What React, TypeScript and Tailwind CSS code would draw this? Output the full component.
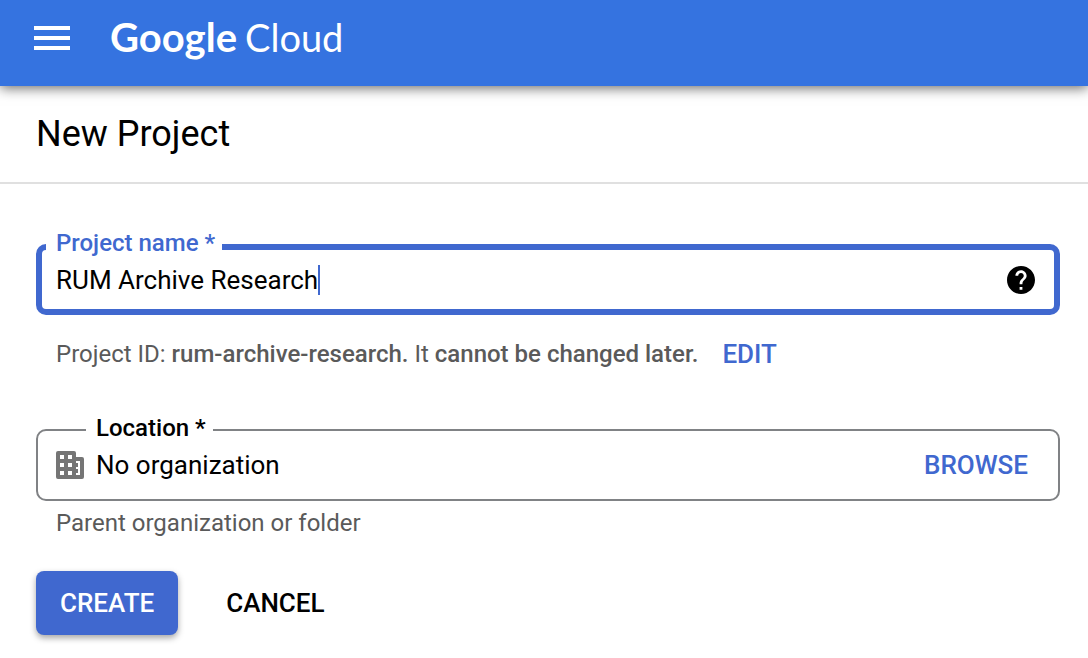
import { useState } from "react";

function HelpIcon() {
  return (
    <svg viewBox="2 2 20 20" className="size-7" fill="currentColor" aria-hidden="true">
      <path d="M12 2C6.48 2 2 6.48 2 12s4.48 10 10 10 10-4.48 10-10S17.52 2 12 2zm1 17h-2v-2h2v2zm2.07-7.75l-.9.92C13.45 12.9 13 13.5 13 15h-2v-.5c0-1.1.45-2.1 1.17-2.83l1.24-1.26c.37-.36.59-.86.59-1.41 0-1.1-.9-2-2-2s-2 .9-2 2H8c0-2.21 1.79-4 4-4s4 1.79 4 4c0 .88-.36 1.68-.93 2.25z" />
    </svg>
  );
}

function OrganizationIcon() {
  return (
    <svg viewBox="0 0 28 28" className="size-7 shrink-0" aria-hidden="true">
      <path
        fill="#757575"
        fillRule="evenodd"
        d="M2 0h16a2 2 0 0 1 2 2v4h6a2 2 0 0 1 2 2v18a2 2 0 0 1-2 2H2a2 2 0 0 1-2-2V2a2 2 0 0 1 2-2zM4 4v4h4V4zM12 4v4h4V4zM4 12v4h4v-4zM12 12v4h4v-4zM4 20v4h4v-4zM12 20v4h4v-4zM20 10v2h2v4h-2v2h2v4h-2v2h4V10z"
      />
    </svg>
  );
}

export default function App() {
  const [name, setName] = useState("RUM Archive Research");
  const projectId = name.trim().toLowerCase().replace(/[^a-z0-9]+/g, "-");

  return (
    <div className="min-h-screen bg-white font-['Roboto',sans-serif] text-black">
      <header className="relative flex h-[86px] items-center gap-10 bg-[#3573e0] px-[34px] pb-2.5 text-white shadow-[0_2px_12px_rgba(0,0,0,0.6)]">
        <button type="button" aria-label="Main menu">
          <svg viewBox="0 0 36 24" className="h-6 w-9" fill="currentColor" aria-hidden="true">
            <path d="M0 0h36v4H0zM0 10h36v4H0zM0 20h36v4H0z" />
          </svg>
        </button>
        <a href="#home" className="flex items-baseline gap-2 pb-0.5 font-['Lato',sans-serif] leading-[48px]">
          <span className="text-[40px] font-bold">Google</span>
          <span className="text-[38px]">Cloud</span>
        </a>
      </header>

      <div className="flex h-[98px] items-center border-b-2 border-[#e0e0e0] px-9">
        <h1 className="text-4xl">New Project</h1>
      </div>

      <form className="pr-7 pb-6 pl-9 pt-[45px]" onSubmit={(event) => event.preventDefault()}>
        <fieldset className="rounded-[10px] border-[6px] border-[#4068cf] pr-[19px] pb-[15px] pl-3.5">
          <legend className="-ml-2.5 pr-[7px] pb-2 pl-2.5 text-2xl leading-7 font-medium text-[#4068cf]">
            <label htmlFor="project-name">Project name *</label>
          </legend>
          <div className="flex h-[29px] items-center">
            <input
              id="project-name"
              type="text"
              required
              value={name}
              onChange={(event) => setName(event.target.value)}
              className="h-[30px] max-w-full [field-sizing:content] bg-transparent text-[26px] leading-[30px] caret-transparent outline-none"
            />
            <span className="h-[30px] w-0.5 bg-[#4068cf]" aria-hidden="true" />
            <button type="button" aria-label="Help" className="ml-auto">
              <HelpIcon />
            </button>
          </div>
        </fieldset>

        <p className="mt-[23px] flex items-center gap-6 pl-5 text-2xl leading-8 text-[#5a5a5a]">
          <span>
            Project ID: <strong className="font-medium">{projectId}.</strong> It{" "}
            <strong className="font-medium">cannot be changed later.</strong>
          </span>
          <button type="button" className="text-[26px] font-medium text-[#4068cf]">
            EDIT
          </button>
        </p>

        <fieldset className="mt-11 rounded-[10px] border-2 border-[#808285] pr-[30px] pb-[15px] pl-[18px]">
          <legend className="ml-[30px] pr-[7px] pb-1 pl-2.5 text-2xl leading-7 font-medium">
            <label htmlFor="location">Location *</label>
          </legend>
          <div className="flex h-[38px] items-center gap-3">
            <OrganizationIcon />
            <input
              id="location"
              type="text"
              readOnly
              value="No organization"
              className="h-[30px] min-w-0 flex-1 bg-transparent text-[26px] leading-[30px] outline-none"
            />
            <button type="button" className="text-[26px] font-medium text-[#4068cf]">
              BROWSE
            </button>
          </div>
        </fieldset>
        <p className="mt-1.5 pl-5 text-2xl leading-8 text-[#5a5a5a]">Parent organization or folder</p>

        <div className="mt-8 flex gap-6 text-[26px] font-medium">
          <button
            type="submit"
            className="h-16 rounded-lg bg-[#4068cf] px-6 text-white shadow-[0_3px_6px_rgba(0,0,0,0.35)]"
          >
            CREATE
          </button>
          <button type="button" className="h-16 rounded-lg px-6">
            CANCEL
          </button>
        </div>
      </form>
    </div>
  );
}
